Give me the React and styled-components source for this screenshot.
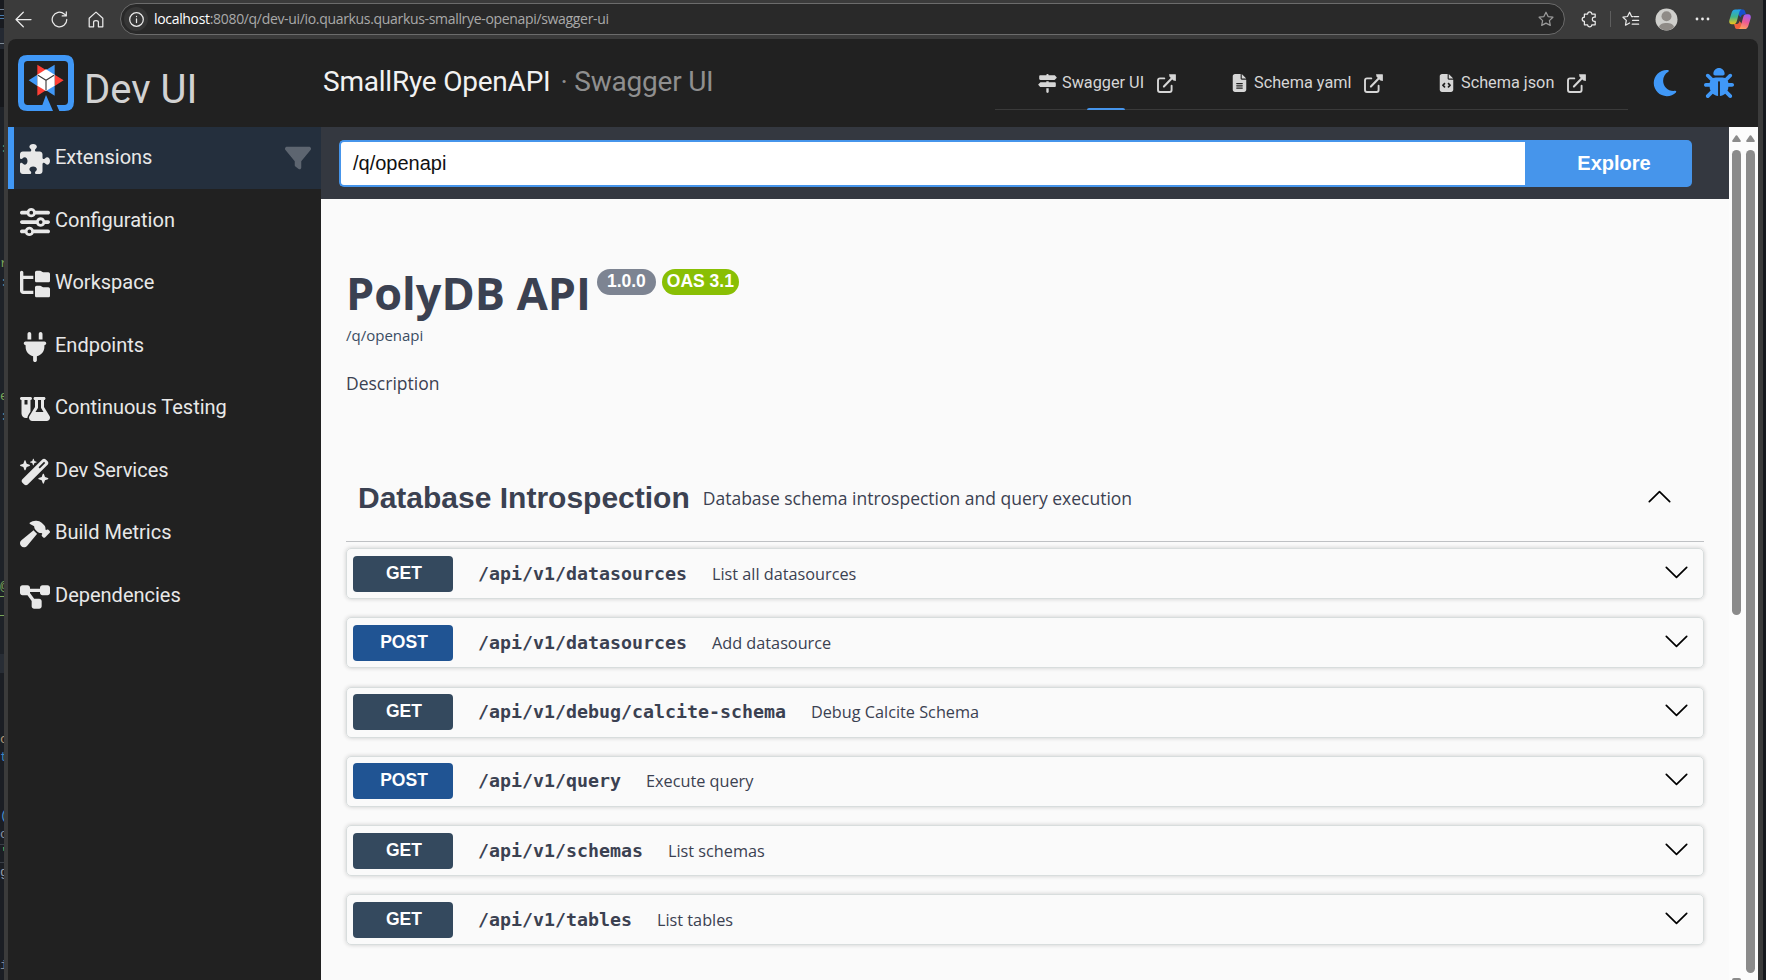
import React from "react";
import styled, { createGlobalStyle } from "styled-components";
import {
  FaPuzzlePiece, FaSliders, FaFolderTree, FaPlug, FaFlaskVial,
  FaWandMagicSparkles, FaHammer, FaDiagramProject, FaFilter, FaSignsPost,
  FaFileLines, FaFileCode, FaMoon, FaBug,
} from "react-icons/fa6";

const GlobalStyle = createGlobalStyle`
  *, *::before, *::after { box-sizing: border-box; }
  html, body, #root { height: 100%; }
  body { margin: 0; overflow: hidden; background: #17191e; }
`;

const roboto = `Roboto, sans-serif`;
const openSans = `"Open Sans", sans-serif`;
const arial = `"Liberation Sans", sans-serif`;

const Desktop = styled.div`
  display: grid;
  grid-template-columns: 4px 1759px 3px;
  height: 980px;
  width: 1766px;
  overflow: hidden;
  background: #17191e;
`;

const EditorStrip = styled.div`
  position: relative;
  overflow: hidden;
  background: linear-gradient(#191b20 0 28px, #242932 28px 49px, #15171b 49px 107px, #1e2228 107px 654px, #282d35 654px 673px, #1b1e24 673px);
`;
const CodeBit = styled.span`
  position: absolute;
  left: 0;
  top: ${(p) => p.$top}px;
  color: ${(p) => p.$color};
  font: 13px/12px "Liberation Mono", monospace;
`;
const CodeRule = styled.i`
  position: absolute;
  left: 0;
  top: ${(p) => p.$top}px;
  width: 4px;
  height: 1px;
  background: ${(p) => p.$color};
`;

const Browser = styled.div`
  display: flex;
  flex-direction: column;
  height: 980px;
  background: #3b3b3b;
`;
const Toolbar = styled.div`
  display: flex;
  align-items: center;
  height: 39px;
  padding: 0 8px 1px 11px;
  color: #eaeaea;
`;
const NavIcon = styled.span`
  display: flex;
  width: ${(p) => p.$w || 18}px;
  margin-left: ${(p) => p.$before || 0}px;
  margin-right: ${(p) => p.$gap || 0}px;
  color: ${(p) => (p.$dim ? "#9a9a9a" : "inherit")};
`;
const AddressBar = styled.div`
  display: flex;
  align-items: center;
  width: 1445px;
  height: 32px;
  padding: 0 10px 0 3px;
  border: 1px solid #6c6c6c;
  border-radius: 16px;
  background: #292929;
`;
const InfoDot = styled.span`
  display: grid;
  place-items: center;
  width: 24px;
  height: 24px;
  margin-right: 6px;
  border-radius: 50%;
  background: #363636;
`;
const Url = styled.span`
  flex: 1;
  font: 14px/20px ${openSans};
  letter-spacing: -0.325px;
  color: #a9a9a9;
  white-space: nowrap;
  b { font-weight: 400; color: #fff; }
`;
const Divider = styled.span`
  width: 1px;
  height: 16px;
  margin: 0 11px 0 12px;
  background: #5e5e5e;
`;

const Page = styled.div`
  display: flex;
  flex-direction: column;
  width: 1750px;
  height: 941px;
  margin-left: 4px;
  overflow: hidden;
  border-radius: 8px 8px 0 0;
  background: #212121;
`;
const Header = styled.header`
  display: flex;
  flex: none;
  height: 88px;
  padding: 0 24px 0 10px;
`;
const Brand = styled.div`
  display: flex;
  width: 305px;
  padding-top: 16px;
  font: 40px/46px ${roboto};
  color: #d2d2d2;
  span { margin: 12px 0 0 10px; }
`;
const PageTitle = styled.div`
  display: flex;
  width: 672px;
  padding-top: 26px;
  font: 28px/34px ${roboto};
  letter-spacing: -0.22px;
  color: #f2f2f2;
  white-space: pre;
`;
const Subtitle = styled.span`
  margin-left: 10px;
  color: #8f8f8f;
`;
const Tabs = styled.nav`
  display: flex;
  width: 633px;
  height: 71px;
  border-bottom: 1px solid #3a3a3a;
  padding-left: 43px;
`;
const Tab = styled.div`
  position: relative;
  display: flex;
  align-items: center;
  width: ${(p) => p.$w}px;
  padding-top: 18px;
  height: 70px;
  font: 16.25px/22px ${roboto};
  color: #d6d6d6;
  svg { flex: none; }
  svg:last-of-type { margin-left: auto; }
  span { white-space: nowrap; margin-left: ${(p) => p.$pad}px; }
  & + & { margin-left: ${(p) => p.$gap}px; }
`;
const TabMark = styled.i`
  position: absolute;
  left: 49px;
  top: 69px;
  width: 38px;
  height: 2px;
  border-radius: 2px 2px 0 0;
  background: #4695eb;
`;
const HeaderTools = styled.div`
  display: flex;
  align-items: flex-start;
  margin-left: auto;
  padding-top: 29px;
  gap: 24px;
  color: #4098f7;
`;

const Body = styled.div`
  display: flex;
  flex: 1;
  min-height: 0;
`;
const Sidebar = styled.aside`
  width: 313px;
  flex: none;
`;
const MenuItem = styled.div`
  display: flex;
  align-items: center;
  height: 62px;
  margin-bottom: 0.5px;
  padding: 0 10px 0 6px;
  border-left: 6px solid ${(p) => (p.$active ? "#4098f7" : "transparent")};
  background: ${(p) => (p.$active ? "#242f3d" : "transparent")};
  font: 20px/24px ${roboto};
  color: #e8e8e8;
`;
const MenuGlyph = styled.span`
  display: grid;
  place-items: center;
  width: 30px;
  height: 30px;
  margin: 2px 5px 0 0;
`;
const MenuText = styled.span`
  flex: 1;
  padding-bottom: 2px;
`;

const Frame = styled.main`
  display: flex;
  flex-direction: column;
  width: 1408px;
  background: #fafafa;
`;
const ScrollArea = styled.div`
  display: flex;
  width: 29px;
  padding: 8px 3px 0;
  gap: 5px;
  background: #fcfcfc;
`;
const ScrollTrack = styled.div`
  display: flex;
  flex-direction: column;
  width: 9px;
  svg { flex: none; }
`;
const Thumb = styled.div`
  flex: none;
  height: ${(p) => p.$h}px;
  margin-top: 8px;
  border-radius: 5px;
  background: #8b8b8b;
`;
const TrackEnd = styled.div`
  margin-top: auto;
  height: 2px;
  border-radius: 2px 2px 0 0;
  background: #8b8b8b;
`;
const Topbar = styled.div`
  display: flex;
  flex: none;
  height: 72px;
  padding: 13px 37px 12px 18px;
  background: #343840;
`;
const SpecInput = styled.div`
  flex: 1;
  height: 47px;
  padding: 0 12px;
  border: 2px solid #4695eb;
  border-right: 0;
  border-radius: 5px 0 0 5px;
  background: #fff;
  font: 20px/42px ${arial};
  color: #111;
`;
const Explore = styled.div`
  width: 167px;
  height: 47px;
  padding-left: 11px;
  border-radius: 0 5px 5px 0;
  background: #4695eb;
  font: bold 20px/46px ${arial};
  color: #fff;
  text-align: center;
`;
const Content = styled.div`
  padding: 0 25px;
  color: #3b4151;
  font-family: ${openSans};
`;
const TitleRow = styled.div`
  display: flex;
  margin-top: 63px;
  height: 61px;
`;
const ApiTitle = styled.h2`
  margin: 0 6px 0 0;
  font: bold 45px/62px ${openSans};
  white-space: nowrap;
`;
const Pill = styled.span`
  width: ${(p) => p.$w}px;
  height: 26px;
  margin: 7px 6px 0 0;
  border-radius: 13px;
  background: ${(p) => p.$bg};
  font: bold 17.5px/24px ${arial};
  color: #fff;
  text-align: center;
`;
const SpecLink = styled.div`
  font: 15px/24px ${openSans};
  color: #3b4d63;
`;
const Description = styled.p`
  margin: 23px 0 0;
  font: 17.5px/26px ${openSans};
`;
const TagHeader = styled.div`
  display: flex;
  align-items: center;
  height: 86px;
  margin-top: 60px;
  padding: 0 33px 2px 12px;
  border-bottom: 1px solid #bfc1c4;
  margin-bottom: 6px;
  svg { margin-bottom: 2px; }
`;
const TagName = styled.h3`
  margin: 0 13px 0 0;
  font: bold 30px/40px ${arial};
`;
const TagText = styled.span`
  flex: 1;
  padding-top: 1px;
  font: 17.5px/26px ${openSans};
`;
const Operation = styled.div`
  display: flex;
  align-items: center;
  width: 1358px;
  height: 51px;
  margin-bottom: 18.3px;
  padding: 0 15px 0 6px;
  border: 1px solid #d8dddd;
  border-radius: 5px;
  box-shadow: 0 0 4px rgba(0, 0, 0, 0.19);
  svg { margin-bottom: 3px; }
`;
const Method = styled.span`
  width: 100px;
  height: 36px;
  border-radius: 4px;
  background: ${(p) => (p.$post ? "#205493" : "#34495e")};
  font: bold 17.5px/34px ${arial};
  color: #fff;
  text-align: center;
  padding-left: 2px;
`;
const Path = styled.span`
  margin: 0 25px 0 25px;
  font: bold 18.28px/24px "DejaVu Sans Mono", monospace;
  white-space: nowrap;
`;
const Summary = styled.span`
  flex: 1;
  font: 16.25px/24px ${openSans};
`;

const Line = ({ w, h = w, sw = 1.25, children }) => (
  <svg width={w} height={h} viewBox={`0 0 ${w} ${h}`} fill="none" stroke="currentColor" strokeWidth={sw} strokeLinecap="round" strokeLinejoin="round">
    {children}
  </svg>
);

const Chevron = ({ up }) => (
  <svg width="23" height="13" viewBox="0 0 23 13" fill="none" stroke="#000" strokeWidth="1.7" strokeLinecap="round" strokeLinejoin="round">
    <path d={up ? "M1.3 11.6 11.5 1.6 21.7 11.6" : "M1.3 1.4 11.5 11.4 21.7 1.4"} />
  </svg>
);

const OpenExternal = () => (
  <svg width="19" height="19" viewBox="0 0 19 19" fill="none" stroke="currentColor" strokeWidth="1.9">
    <path strokeLinecap="round" d="M7.3 4.4H3Q1 4.4 1 6.4V16Q1 18 3 18H12.6Q14.6 18 14.6 16V11.8" />
    <path strokeWidth="2.1" strokeLinecap="round" d="M6.9 12.6 15.6 3.6" />
    <path fill="currentColor" stroke="none" d="M12 .2H18.4Q18.9.2 18.9.7V7.1L16.4 6.5 12.6 2.7Z" />
  </svg>
);

const QuarkusLogo = () => (
  <svg width="56" height="56" viewBox="0 0 168 168">
    <path fill="#4098f7" d="M28 0H140Q168 0 168 28V140Q168 168 140 168H124L116 150H139Q150 150 150 139V29Q150 18 139 18H29Q18 18 18 29V139Q18 150 29 150H73L84 120 105 168H28Q0 168 0 140V28Q0 0 28 0Z" />
    <path fill="#ff3f35" d="M58 29 84 45 58 61ZM137 76 110 59V93ZM58 122 84 106 58 90Z" />
    <path fill="#4098f7" d="M110 29 84 45 110 61ZM32 76 58 59V93ZM110 122 84 106 110 90Z" />
    <path fill="#fff" d="M84 43 110 59V92L84 108 58 92V59Z" />
    <path fill="none" stroke="#3d3d3d" strokeWidth="3.4" d="M60 61 84 76 108 61M84 76V106" />
  </svg>
);

const Copilot = () => (
  <svg width="22" height="21" viewBox="0 0 22 21">
    <defs>
      <linearGradient id="cpA" x1="0" y1="0" x2="0" y2="1">
        <stop offset="0" stopColor="#21a6ee" /><stop offset=".5" stopColor="#41b58b" /><stop offset="1" stopColor="#f5c516" />
      </linearGradient>
      <linearGradient id="cpB" x1="0.6" y1="0" x2="0.3" y2="1">
        <stop offset="0" stopColor="#a25cf0" /><stop offset=".5" stopColor="#ee5b93" /><stop offset="1" stopColor="#ffa45c" />
      </linearGradient>
    </defs>
    <path fill="#1650cf" d="M9 .5H14C15.6.5 16 1.8 16.4 3.2L17 5.4H14.5C12.6 5.4 12 6.8 11.5 8.6L9 5Z" />
    <path fill="#f0613d" d="M13 20H8C6.4 20 6 18.7 5.7 17.3L5 15H7.6C9.4 15 10 13.7 10.5 12L13 15Z" />
    <path fill="url(#cpA)" d="M6.4.5H12.8C11 .8 10.5 2.6 10 4.3L7.8 12.3C7.2 14.4 6.4 15.3 4.4 15.3H2.9C.4 15.3-.2 13.2.4 11L2.7 3.6C3.4 1.6 4.4.5 6.4.5Z" />
    <path fill="url(#cpB)" d="M15.6 20H9.2C11 19.7 11.5 18 12 16.2L14.2 8.2C14.8 6.2 15.6 5.3 17.6 5.3H19.1C21.6 5.3 22.2 7.3 21.6 9.5L19.3 16.9C18.6 19 17.6 20 15.6 20Z" />
  </svg>
);

const ScrollArrow = () => (
  <svg width="9" height="7" viewBox="0 0 9 7"><path fill="#8b8b8b" d="M3.8.6Q4.5-.2 5.2.6L8.8 5.7Q9 7 8 7H1Q0 7 .2 5.7Z" /></svg>
);

const codeBits = [
  [143, ":", "#57936b"], [258, "r", "#7aa65a"], [277, ":", "#5f8794"],
  [391, "e", "#7aa65a"], [411, ":", "#5f8794"], [581, "@", "#7aa65a"],
  [734, "c", "#b59a78"], [752, "t", "#3c86c4"], [810, "(", "#4c8fd0"],
  [829, "o", "#8a94a8"], [847, "'", "#6cbb5a"], [867, "g", "#98a0b0"],
  [960, "i", "#7c8794"],
];
const codeRules = [
  [9, "#6f7f92"], [15, "#4b7bab"], [18, "#4b7bab"], [43, "#7f8a95"],
  [596, "#7aa65a"], [615, "#7aa65a"], [844, "#3a3f47"], [862, "#3a3f47"],
];

const menu = [
  [FaPuzzlePiece, "Extensions"], [FaSliders, "Configuration"],
  [FaFolderTree, "Workspace"], [FaPlug, "Endpoints"],
  [FaFlaskVial, "Continuous Testing"], [FaWandMagicSparkles, "Dev Services"],
  [FaHammer, "Build Metrics"], [FaDiagramProject, "Dependencies"],
];

const operations = [
  ["GET", "/api/v1/datasources", "List all datasources"],
  ["POST", "/api/v1/datasources", "Add datasource"],
  ["GET", "/api/v1/debug/calcite-schema", "Debug Calcite Schema"],
  ["POST", "/api/v1/query", "Execute query"],
  ["GET", "/api/v1/schemas", "List schemas"],
  ["GET", "/api/v1/tables", "List tables"],
];

const starPath = "M8 1.2 10.1 5.6 14.9 6.2 11.4 9.6 12.3 14.4 8 12.1 3.7 14.4 4.6 9.6 1.1 6.2 5.9 5.6Z";

export default function App() {
  return (
    <>
      <GlobalStyle />
      <Desktop>
        <EditorStrip>
          {codeBits.map(([top, ch, color]) => (
            <CodeBit key={top} $top={top} $color={color}>{ch}</CodeBit>
          ))}
          {codeRules.map(([top, color]) => (
            <CodeRule key={top} $top={top} $color={color} />
          ))}
        </EditorStrip>
        <Browser>
          <Toolbar>
            <NavIcon $w={17} $gap={19}><Line w={17} h={17}><path d="M16 8.5H1M8.3 1.2 1 8.5 8.3 15.8" /></Line></NavIcon>
            <NavIcon $w={17} $gap={20}><Line w={17} h={17}><path d="M15.8 8.5A7.3 7.3 0 1 1 13.2 2.9L15.2 4.8M15.3.9V4.9H11.2" /></Line></NavIcon>
            <NavIcon $w={16} $gap={16}><Line w={16} h={17}><path d="M1.2 7.3 8 1.1 14.8 7.3V15.8H10.4V11.2Q10.4 9.6 8 9.6 5.6 9.6 5.6 11.2V15.8H1.2Z" /></Line></NavIcon>
            <AddressBar>
              <InfoDot><Line w={15}><circle cx="7.5" cy="7.5" r="6.8" /><path d="M7.5 6.9V10.6M7.5 4.4V4.6" /></Line></InfoDot>
              <Url><b>localhost</b>:8080/q/dev-ui/io.quarkus.quarkus-smallrye-openapi/swagger-ui</Url>
              <NavIcon $w={16} $dim><Line w={16}><path d={starPath} /></Line></NavIcon>
            </AddressBar>
            <NavIcon $w={17} $before={16}>
              <Line w={17} h={17}><path d="M3.4 3H6.6Q6.8.9 8.7.9T10.8 3H14.2V6.2H13.1Q11.3 6.4 11.3 8.3T13.1 10.4H14.2V13.8H10.8Q10.6 15.9 8.7 15.9T6.6 13.8H3.4V10.4Q1.2 10.2 1.2 8.3T3.4 6.2Z" /></Line>
            </NavIcon>
            <Divider />
            <NavIcon $w={18} $gap={15}>
              <Line w={18} h={16}><path d="M10.8 5.5H9.6L7.6 1.2 5.5 5.5 1 6.2 4.3 9.4 3.5 14.2 7.6 12M12 5.6H16.6M10.6 9.4H16.6M10.2 13.2H16.6" /></Line>
            </NavIcon>
            <NavIcon $w={23} $gap={17}>
              <svg width="23" height="23" viewBox="0 0 23 23"><circle cx="11.5" cy="11.5" r="11" fill="#cfcfcc" /><circle cx="11.5" cy="8.2" r="5" fill="#8f8b87" /><path fill="#8f8b87" d="M4 19.3C4 13.4 19 13.4 19 19.3 15 23.4 8 23.4 4 19.3Z" /></svg>
            </NavIcon>
            <NavIcon $w={15} $gap={19}><svg width="15" height="4" fill="#eaeaea"><circle cx="2" cy="2" r="1.4" /><circle cx="7.5" cy="2" r="1.4" /><circle cx="13" cy="2" r="1.4" /></svg></NavIcon>
            <Copilot />
          </Toolbar>
          <Page>
            <Header>
              <Brand><QuarkusLogo /><span>Dev UI</span></Brand>
              <PageTitle>SmallRye OpenAPI<Subtitle>· Swagger UI</Subtitle></PageTitle>
              <Tabs>
                <Tab $w={138} $pad={5}><FaSignsPost size={19} /><span>Swagger UI</span><OpenExternal /><TabMark /></Tab>
                <Tab $w={151} $pad={7} $gap={56}><FaFileLines size={18} style={{ width: 15 }} /><span>Schema yaml</span><OpenExternal /></Tab>
                <Tab $w={147} $pad={7} $gap={56}><FaFileCode size={18} style={{ width: 15 }} /><span>Schema json</span><OpenExternal /></Tab>
              </Tabs>
              <HeaderTools><FaMoon size={30} /><FaBug size={30} /></HeaderTools>
            </Header>
            <Body>
              <Sidebar>
                {menu.map(([Icon, label], i) => (
                  <MenuItem key={label} $active={i === 0}>
                    <MenuGlyph><Icon size={30} /></MenuGlyph>
                    <MenuText>{label}</MenuText>
                    {i === 0 && <FaFilter size={26} color="#5d6570" />}
                  </MenuItem>
                ))}
              </Sidebar>
              <Frame>
                <Topbar><SpecInput>/q/openapi</SpecInput><Explore>Explore</Explore></Topbar>
                <Content>
                  <TitleRow>
                    <ApiTitle>PolyDB API</ApiTitle>
                    <Pill $w={59} $bg="#7d8492">1.0.0</Pill>
                    <Pill $w={77} $bg="#89bf04">OAS 3.1</Pill>
                  </TitleRow>
                  <SpecLink>/q/openapi</SpecLink>
                  <Description>Description</Description>
                  <TagHeader>
                    <TagName>Database Introspection</TagName>
                    <TagText>Database schema introspection and query execution</TagText>
                    <Chevron up />
                  </TagHeader>
                  {operations.map(([method, path, summary]) => (
                    <Operation key={method + path}>
                      <Method $post={method === "POST"}>{method}</Method>
                      <Path>{path}</Path>
                      <Summary>{summary}</Summary>
                      <Chevron />
                    </Operation>
                  ))}
                </Content>
              </Frame>
              <ScrollArea>
                <ScrollTrack><ScrollArrow /><Thumb $h={465} /><TrackEnd /></ScrollTrack>
                <ScrollTrack><ScrollArrow /><Thumb $h={823} /></ScrollTrack>
              </ScrollArea>
            </Body>
          </Page>
        </Browser>
      </Desktop>
    </>
  );
}
